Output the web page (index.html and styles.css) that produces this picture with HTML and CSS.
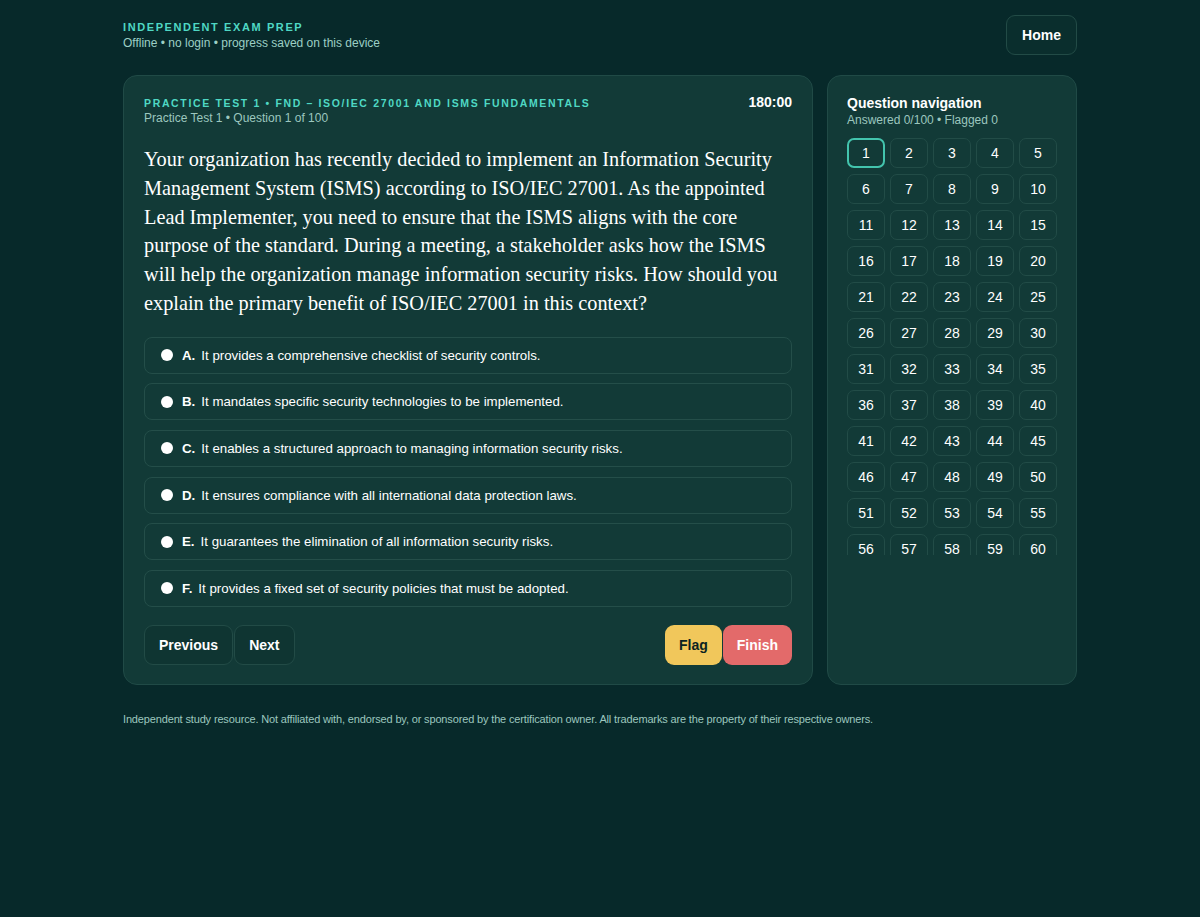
FILE: index.html
```html
<!DOCTYPE html>
<html lang="en">
<head>
    <meta charset="UTF-8">
    <meta name="viewport" content="width=device-width, initial-scale=1.0">
    <title>Independent Exam Prep - Practice Test 1</title>
    <link rel="stylesheet" href="styles.css">
</head>
<body>

    <div class="wrap">

        <!-- Top bar -->
        <header class="topbar">
            <div class="brand">
                <div class="brand-title">INDEPENDENT EXAM PREP</div>
                <div class="brand-sub">Offline • no login • progress saved on this device</div>
            </div>
            <button class="btn btn-ghost">Home</button>
        </header>

        <main class="layout">

            <!-- Question card -->
            <section class="card quiz">
                <div class="quiz-head">
                    <div>
                        <div class="eyebrow">PRACTICE TEST 1 • FND – ISO/IEC 27001 AND ISMS FUNDAMENTALS</div>
                        <div class="muted">Practice Test 1 • Question 1 of 100</div>
                    </div>
                    <div class="timer">180:00</div>
                </div>

                <p class="question">Your organization has recently decided to implement an Information Security Management System (ISMS) according to ISO/IEC 27001. As the appointed Lead Implementer, you need to ensure that the ISMS aligns with the core purpose of the standard. During a meeting, a stakeholder asks how the ISMS will help the organization manage information security risks. How should you explain the primary benefit of ISO/IEC 27001 in this context?</p>

                <div class="options" id="options"></div>

                <div class="actions">
                    <div class="btn-row">
                        <button class="btn btn-ghost">Previous</button>
                        <button class="btn btn-ghost">Next</button>
                    </div>
                    <div class="btn-row">
                        <button class="btn btn-flag">Flag</button>
                        <button class="btn btn-finish">Finish</button>
                    </div>
                </div>
            </section>

            <!-- Question navigation -->
            <aside class="card nav">
                <div class="nav-title">Question navigation</div>
                <div class="muted">Answered 0/100 • Flagged 0</div>
                <div class="nav-grid" id="nav-grid"></div>
            </aside>

        </main>

        <footer class="footer">Independent study resource. Not affiliated with, endorsed by, or sponsored by the certification owner. All trademarks are the property of their respective owners.</footer>

    </div>

    <script>
        const options = [
            ["A", "It provides a comprehensive checklist of security controls."],
            ["B", "It mandates specific security technologies to be implemented."],
            ["C", "It enables a structured approach to managing information security risks."],
            ["D", "It ensures compliance with all international data protection laws."],
            ["E", "It guarantees the elimination of all information security risks."],
            ["F", "It provides a fixed set of security policies that must be adopted."]
        ];

        const optionList = document.getElementById("options");
        options.forEach(([key, text]) => {
            const row = document.createElement("label");
            row.className = "option";
            row.innerHTML = '<span class="radio"></span><b>' + key + '.</b><span>' + text + '</span>';
            optionList.appendChild(row);
        });

        const grid = document.getElementById("nav-grid");
        for (let i = 1; i <= 100; i++) {
            const cell = document.createElement("button");
            cell.className = "q-btn" + (i === 1 ? " current" : "");
            cell.textContent = i;
            grid.appendChild(cell);
        }
    </script>
</body>
</html>
```

FILE: styles.css
```css
body {
    font-family: "Liberation Sans", Arial, sans-serif;
    margin: 0;
    padding: 0;
    background-color: #07292a;
    color: #fff;
}

.wrap {
    width: 954px;
    margin: 0 auto;
    padding-top: 15px;
}

.topbar {
    display: flex;
    justify-content: space-between;
    align-items: center;
    height: 40px;
}

.brand-title {
    font-size: 11px;
    font-weight: bold;
    letter-spacing: 1.6px;
    color: #4fd8c4;
}

.brand-sub {
    font-size: 12px;
    color: #9ccfc5;
    margin-top: 3px;
}

.layout {
    display: grid;
    grid-template-columns: 690px 250px;
    gap: 14px;
    margin-top: 20px;
}

.card {
    background-color: #123a37;
    border: 1px solid #204a46;
    border-radius: 14px;
    height: 610px;
    box-sizing: border-box;
}

.quiz {
    padding: 20px 20px;
}

.quiz-head {
    display: flex;
    justify-content: space-between;
    align-items: flex-start;
}

.eyebrow {
    font-size: 10.5px;
    font-weight: bold;
    letter-spacing: 1.65px;
    color: #4fd8c4;
    margin-top: 1px;
}

.muted {
    font-size: 12px;
    color: #9cc7bf;
    margin-top: 2px;
}

.timer {
    font-size: 14px;
    font-weight: bold;
    margin-top: -2px;
}

.question {
    font-family: "Liberation Serif", "Times New Roman", serif;
    font-size: 20.3px;
    line-height: 28.8px;
    margin: 20px 0 19px;
    color: #fff;
}

.options {
    display: flex;
    flex-direction: column;
    gap: 9.6px;
}

.option {
    display: flex;
    align-items: center;
    height: 37px;
    box-sizing: border-box;
    padding: 0 16px;
    border: 1px solid #244e49;
    border-radius: 8px;
    font-size: 13.3px;
    color: #fff;
    cursor: pointer;
}

.option b {
    margin-right: 6px;
}

.radio {
    width: 12px;
    height: 12px;
    border-radius: 50%;
    background-color: #fff;
    margin-right: 9px;
}

.actions {
    display: flex;
    justify-content: space-between;
    margin-top: 18px;
}

.btn-row {
    display: flex;
    gap: 1px;
}

.btn {
    font-family: "Liberation Sans", Arial, sans-serif;
    font-size: 14px;
    font-weight: bold;
    height: 40px;
    padding: 0 14px;
    border-radius: 9px;
    cursor: pointer;
}

.btn-ghost {
    background-color: #0f3532;
    color: #fff;
    border: 1px solid #224b46;
}

.topbar .btn-ghost {
    background-color: #0a2e2d;
    padding: 0 15px;
}

.btn-flag {
    background-color: #f1c75b;
    color: #0b2322;
    border: none;
}

.btn-finish {
    background-color: #e36a6a;
    color: #fff;
    border: none;
}

.nav {
    padding: 19px 19px;
}

.nav-title {
    font-size: 14px;
    font-weight: bold;
}

.nav-grid {
    display: grid;
    grid-template-columns: repeat(5, 38px);
    grid-auto-rows: 30px;
    column-gap: 5px;
    row-gap: 6px;
    margin-top: 11px;
    max-height: 417px;
    overflow: hidden;
}

.q-btn {
    font-family: "Liberation Sans", Arial, sans-serif;
    font-size: 14px;
    color: #fff;
    background-color: transparent;
    border: 1px solid #224c47;
    border-radius: 7px;
    padding: 0;
    cursor: pointer;
}

.q-btn.current {
    border: 2px solid #43c4ad;
}

.footer {
    font-size: 11px;
    letter-spacing: -0.15px;
    color: #9cc7bf;
    margin-top: 28px;
}
```
